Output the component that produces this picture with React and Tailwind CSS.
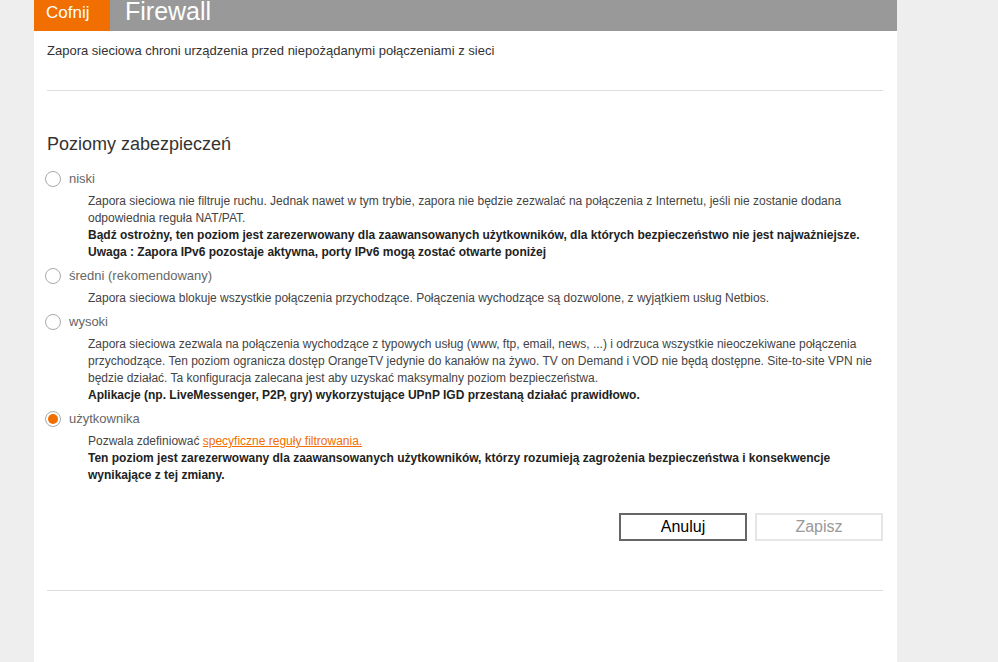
import React, { useState } from 'react';

const levels = [
  {
    id: 'niski',
    label: 'niski',
    body: (
      <>
        <p>
          Zapora sieciowa nie filtruje ruchu. Jednak nawet w tym trybie, zapora nie będzie zezwalać na połączenia z Internetu, jeśli nie zostanie dodana odpowiednia reguła NAT/PAT.
        </p>
        <p className="font-bold text-[#222]">
          Bądź ostrożny, ten poziom jest zarezerwowany dla zaawansowanych użytkowników, dla których bezpieczeństwo nie jest najważniejsze.
        </p>
        <p className="font-bold text-[#222]">
          Uwaga : Zapora IPv6 pozostaje aktywna, porty IPv6 mogą zostać otwarte poniżej
        </p>
      </>
    ),
  },
  {
    id: 'sredni',
    label: 'średni (rekomendowany)',
    body: (
      <p>
        Zapora sieciowa blokuje wszystkie połączenia przychodzące. Połączenia wychodzące są dozwolone, z wyjątkiem usług Netbios.
      </p>
    ),
  },
  {
    id: 'wysoki',
    label: 'wysoki',
    body: (
      <>
        <p>
          Zapora sieciowa zezwala na połączenia wychodzące z typowych usług (www, ftp, email, news, ...) i odrzuca wszystkie nieoczekiwane połączenia przychodzące. Ten poziom ogranicza dostęp OrangeTV jedynie do kanałów na żywo. TV on Demand i VOD nie będą dostępne. Site-to-site VPN nie będzie działać. Ta konfiguracja zalecana jest aby uzyskać maksymalny poziom bezpieczeństwa.
        </p>
        <p className="font-bold text-[#222]">
          Aplikacje (np. LiveMessenger, P2P, gry) wykorzystujące UPnP IGD przestaną działać prawidłowo.
        </p>
      </>
    ),
  },
  {
    id: 'uzytkownika',
    label: 'użytkownika',
    body: (
      <>
        <p>
          Pozwala zdefiniować{' '}
          <a href="#" className="text-[#f16e00] underline">specyficzne reguły filtrowania.</a>
        </p>
        <p className="font-bold text-[#222]">
          Ten poziom jest zarezerwowany dla zaawansowanych użytkowników, którzy rozumieją zagrożenia bezpieczeństwa i konsekwencje wynikające z tej zmiany.
        </p>
      </>
    ),
  },
];

function Radio({ checked }) {
  return (
    <span className="w-[16px] h-[16px] rounded-full border border-[#aaa] bg-white flex items-center justify-center shrink-0">
      {checked && <span className="w-[10px] h-[10px] rounded-full bg-[#f16e00]" />}
    </span>
  );
}

export default function App() {
  const [level, setLevel] = useState('uzytkownika');

  return (
    <div className="w-[998px] h-[662px] bg-[#eeeeee] overflow-hidden" style={{ fontFamily: '"Liberation Sans", Arial, sans-serif' }}>
      <div className="ml-[34px] w-[863px] h-full bg-white">
        <header className="flex h-[31px] overflow-hidden">
          <button className="w-[76px] bg-[#f16e00] text-white text-[17px] leading-none flex items-start pl-[12px] pt-[4px]">
            Cofnij
          </button>
          <div className="flex-1 bg-[#999999] text-white text-[25px] leading-[25px] pl-[15px] -mt-[1px]">
            Firewall
          </div>
        </header>

        <div className="px-[13px] pr-[14px]">
          <p className="mt-[12px] text-[13px] leading-[15px] text-[#333]">
            Zapora sieciowa chroni urządzenia przed niepożądanymi połączeniami z sieci
          </p>
          <div className="mt-[32px] border-t border-[#dddddd]" />

          <h2 className="mt-[42px] text-[18px] leading-[22px] text-[#333]">Poziomy zabezpieczeń</h2>

          <div className="mt-[15px] flex flex-col">
            {levels.map((l) => (
              <div key={l.id} className="mb-[6px]">
                <label className="flex items-center gap-[8px] h-[18px] -ml-[2px] cursor-pointer" onClick={() => setLevel(l.id)}>
                  <Radio checked={level === l.id} />
                  <span className="text-[13px] text-[#666]">{l.label}</span>
                </label>
                <div className="mt-[5px] pl-[41px] pr-[8px] text-[12px] leading-[17px] text-[#444]">
                  {l.body}
                </div>
              </div>
            ))}
          </div>

          <div className="mt-[23px] flex justify-end gap-[8px]">
            <button className="w-[128px] h-[28px] border-2 border-[#666] text-[16px] text-black bg-white">Anuluj</button>
            <button className="w-[128px] h-[28px] border-2 border-[#e5e5e5] text-[16px] text-[#999] bg-white">Zapisz</button>
          </div>

          <div className="mt-[49px] border-t border-[#dddddd]" />
        </div>
      </div>
    </div>
  );
}
